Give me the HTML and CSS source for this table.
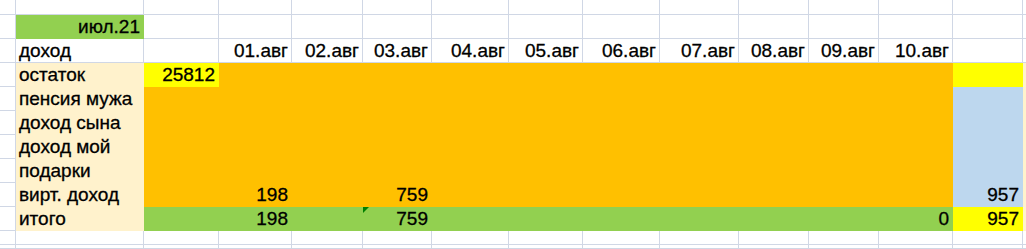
FILE: index.html
```html
<!DOCTYPE html>
<html lang="ru">
<head>
<meta charset="utf-8">
<title>Доход</title>
<link rel="stylesheet" href="styles.css">
</head>
<body>
<div class="sheet">
  <!-- row 1 -->
  <div class="c"></div><div class="c"></div><div class="c"></div><div class="c"></div><div class="c"></div><div class="c"></div><div class="c"></div><div class="c"></div><div class="c"></div><div class="c"></div><div class="c"></div><div class="c"></div><div class="c"></div><div class="c"></div><div class="c"></div>
  <!-- row 2 -->
  <div class="c"></div><div class="c g r">июл.21</div><div class="c"></div><div class="c"></div><div class="c"></div><div class="c"></div><div class="c"></div><div class="c"></div><div class="c"></div><div class="c"></div><div class="c"></div><div class="c"></div><div class="c"></div><div class="c"></div><div class="c"></div>
  <!-- row 3 -->
  <div class="c"></div><div class="c">доход</div><div class="c"></div><div class="c r">01.авг</div><div class="c r">02.авг</div><div class="c r">03.авг</div><div class="c r">04.авг</div><div class="c r">05.авг</div><div class="c r">06.авг</div><div class="c r">07.авг</div><div class="c r">08.авг</div><div class="c r">09.авг</div><div class="c r">10.авг</div><div class="c"></div><div class="c"></div>
  <!-- row 4 -->
  <div class="c"></div><div class="c b">остаток</div><div class="c y r">25812</div><div class="c o"></div><div class="c o"></div><div class="c o"></div><div class="c o"></div><div class="c o"></div><div class="c o"></div><div class="c o"></div><div class="c o"></div><div class="c o"></div><div class="c o"></div><div class="c y"></div><div class="c b"></div>
  <!-- row 5 -->
  <div class="c"></div><div class="c b">пенсия мужа</div><div class="c o"></div><div class="c o"></div><div class="c o"></div><div class="c o"></div><div class="c o"></div><div class="c o"></div><div class="c o"></div><div class="c o"></div><div class="c o"></div><div class="c o"></div><div class="c o"></div><div class="c bl"></div><div class="c b"></div>
  <!-- row 6 -->
  <div class="c"></div><div class="c b">доход сына</div><div class="c o"></div><div class="c o"></div><div class="c o"></div><div class="c o"></div><div class="c o"></div><div class="c o"></div><div class="c o"></div><div class="c o"></div><div class="c o"></div><div class="c o"></div><div class="c o"></div><div class="c bl"></div><div class="c b"></div>
  <!-- row 7 -->
  <div class="c"></div><div class="c b">доход мой</div><div class="c o"></div><div class="c o"></div><div class="c o"></div><div class="c o"></div><div class="c o"></div><div class="c o"></div><div class="c o"></div><div class="c o"></div><div class="c o"></div><div class="c o"></div><div class="c o"></div><div class="c bl"></div><div class="c b"></div>
  <!-- row 8 -->
  <div class="c"></div><div class="c b">подарки</div><div class="c o"></div><div class="c o"></div><div class="c o"></div><div class="c o"></div><div class="c o"></div><div class="c o"></div><div class="c o"></div><div class="c o"></div><div class="c o"></div><div class="c o"></div><div class="c o"></div><div class="c bl"></div><div class="c b"></div>
  <!-- row 9 -->
  <div class="c"></div><div class="c b">вирт. доход</div><div class="c o"></div><div class="c o r">198</div><div class="c o"></div><div class="c o r">759</div><div class="c o"></div><div class="c o"></div><div class="c o"></div><div class="c o"></div><div class="c o"></div><div class="c o"></div><div class="c o"></div><div class="c bl r">957</div><div class="c b"></div>
  <!-- row 10 -->
  <div class="c"></div><div class="c b">итого</div><div class="c g"></div><div class="c g r">198</div><div class="c g"></div><div class="c g r err">759</div><div class="c g"></div><div class="c g"></div><div class="c g"></div><div class="c g"></div><div class="c g"></div><div class="c g"></div><div class="c g r">0</div><div class="c y r">957</div><div class="c b"></div>
  <!-- row 11 -->
  <div class="c"></div><div class="c"></div><div class="c"></div><div class="c"></div><div class="c"></div><div class="c"></div><div class="c"></div><div class="c"></div><div class="c"></div><div class="c"></div><div class="c"></div><div class="c"></div><div class="c"></div><div class="c"></div><div class="c"></div>
  <!-- row 12 -->
  <div class="c"></div><div class="c"></div><div class="c"></div><div class="c"></div><div class="c"></div><div class="c"></div><div class="c"></div><div class="c"></div><div class="c"></div><div class="c"></div><div class="c"></div><div class="c"></div><div class="c"></div><div class="c"></div><div class="c"></div>
</div>
</body>
</html>
```

FILE: styles.css
```css
html, body {
  margin: 0;
  padding: 0;
  background: #ffffff;
}

.sheet {
  display: grid;
  grid-template-columns: 16px 128px 75px 73px 71px 69px 77px 74px 77px 79px 70px 70px 74px 70px 1fr;
  grid-template-rows: 15px repeat(9, 24px) 14px 1fr;
  height: 249px;
  overflow: hidden;
  font-family: "Liberation Sans", Arial, sans-serif;
  font-size: 19px;
  line-height: 22px;
  color: #000000;
  -webkit-text-stroke: 0.3px #000000;
}

.c {
  box-sizing: border-box;
  border-right: 1px solid #d0d7e5;
  border-bottom: 1px solid #d0d7e5;
  display: flex;
  align-items: flex-end;
  justify-content: flex-start;
  padding: 0 3px 0 3px;
  white-space: nowrap;
  overflow: hidden;
  position: relative;
}

.r {
  justify-content: flex-end;
}

.g  { background: #92d050; border-color: transparent; }
.o  { background: #ffc000; border-color: transparent; }
.y  { background: #ffff00; border-color: transparent; }
.b  { background: #fff2cc; border-color: transparent; }
.bl { background: #bdd7ee; border-color: transparent; }

.err::before {
  content: "";
  position: absolute;
  left: 0;
  top: 0;
  width: 0;
  height: 0;
  border-top: 6px solid #008000;
  border-right: 6px solid transparent;
}
```
